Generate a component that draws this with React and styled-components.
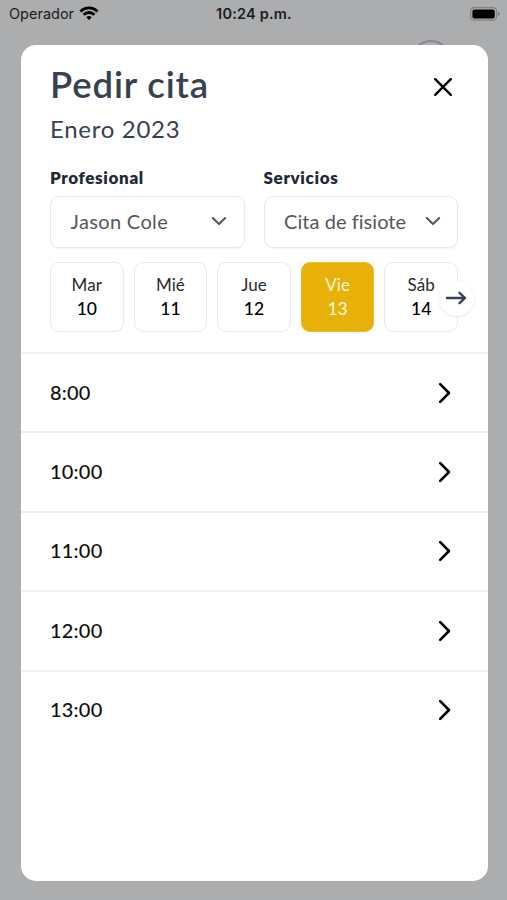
import React, { useState } from 'react';
import styled, { createGlobalStyle } from 'styled-components';

const GlobalStyle = createGlobalStyle`
  * {
    box-sizing: border-box;
  }
  body {
    margin: 0;
    background: #acadaf;
    font-family: Lato, "Liberation Sans", sans-serif;
  }
  button {
    padding: 0;
    border: 0;
    background: none;
    font: inherit;
    color: inherit;
  }
  svg {
    display: block;
    fill: none;
    stroke: currentColor;
    stroke-linecap: round;
    stroke-linejoin: round;
  }
`;

const Screen = styled.div`
  position: relative;
  display: flex;
  flex-direction: column;
  height: 900px;
  overflow: hidden;
`;

const StatusBar = styled.div`
  display: grid;
  grid-template-columns: 1fr auto 1fr;
  align-items: center;
  flex: none;
  height: 27px;
  margin-bottom: 17.5px;
  padding: 0 7px 0 9px;
  font-family: Inter, sans-serif;
  font-size: 14.5px;
  color: #1c1c1d;
`;

const Carrier = styled.div`
  display: flex;
  align-items: center;
  gap: 5px;
`;

const WifiIcon = styled.svg`
  color: #000;
  stroke-linecap: butt;
`;

const Clock = styled.div`
  padding-right: 1px;
  font-weight: 600;
  letter-spacing: 0.2px;
`;

const Battery = styled.div`
  justify-self: end;
`;

// Botón de la pantalla de atrás, asoma por encima del modal
const BackgroundCircle = styled.div`
  position: absolute;
  top: 40px;
  left: 410px;
  width: 42px;
  height: 42px;
  border: 2px solid #85868e;
  border-radius: 50%;
`;

const Modal = styled.div`
  position: relative;
  flex: none;
  width: 467px;
  height: 836.5px;
  margin-left: 20.5px;
  border-radius: 15px;
  background: #fff;
`;

const Header = styled.div`
  display: flex;
  justify-content: space-between;
  padding: 16.5px 34.5px 0 29.5px;
`;

const Title = styled.h1`
  margin: 0;
  font-size: 36.5px;
  line-height: 46px;
  font-weight: 600;
  letter-spacing: 0.85px;
  color: #374151;
`;

const Month = styled.div`
  font-size: 24px;
  line-height: 44px;
  letter-spacing: 0.7px;
  color: #374151;
`;

const CloseButton = styled.button`
  align-self: flex-start;
  margin-top: 15.5px;
`;

const Filters = styled.div`
  display: grid;
  grid-template-columns: 1fr 1fr;
  gap: 19px;
  padding: 15px 29.5px 0;
`;

const Label = styled.div`
  margin-bottom: 6px;
  font-size: 17px;
  line-height: 24px;
  font-weight: 800;
  letter-spacing: 0.65px;
  color: #1f2937;
`;

const Select = styled.button`
  display: flex;
  align-items: center;
  justify-content: space-between;
  width: 100%;
  height: 51.5px;
  padding: 0 16.5px 1px 19.5px;
  border: 1.5px solid #e7e8ea;
  border-radius: 9px;
  box-shadow: 0 1px 2px rgba(0, 0, 0, 0.05);
  font-size: 20px;
  letter-spacing: ${({ $spacing }) => $spacing};
  color: #55575b;
`;

const Days = styled.div`
  position: relative;
  display: flex;
  gap: 10px;
  padding: 14.5px 29.5px 20px;
`;

const Day = styled.button`
  flex: 1;
  height: 70px;
  padding-bottom: 1px;
  border: 1.5px solid ${({ $active }) => ($active ? '#eebb2b' : '#e9eaec')};
  border-radius: 9px;
  background: ${({ $active }) => ($active ? '#e7b10a' : '#fff')};
  color: ${({ $active }) => ($active ? '#fff6d5' : '#2b2b2b')};
`;

const DayName = styled.div`
  font-size: 17px;
  line-height: 24px;
  letter-spacing: 0.1px;
`;

const DayNumber = styled.div`
  font-size: 17.5px;
  line-height: 24px;
  font-weight: 500;
  color: ${({ $active }) => ($active ? 'inherit' : '#000')};
`;

const NextButton = styled.button`
  position: absolute;
  top: 33px;
  right: 14px;
  display: flex;
  align-items: center;
  justify-content: center;
  width: 35px;
  height: 35px;
  border-radius: 50%;
  background: #fff;
  box-shadow: 0 1px 3px rgba(0, 0, 0, 0.1);
  color: #374151;
`;

const Slot = styled.button`
  display: flex;
  align-items: center;
  justify-content: space-between;
  width: 100%;
  height: 79.4px;
  padding: 0 37px 0 29.5px;
  border-top: 2px solid #eeeff1;
  font-size: 20px;
  font-weight: 500;
  letter-spacing: 0.2px;
  color: #111;
`;

const SlotTime = styled.span`
  margin-top: -2px;
`;

const ChevronDown = () => (
  <svg width="16" height="10" viewBox="0 0 16 10" strokeWidth="2.1">
    <path d="M1.8 2L8 8l6.200-6" />
  </svg>
);

const days = [
  { name: 'Mar', number: 10 },
  { name: 'Mié', number: 11 },
  { name: 'Jue', number: 12 },
  { name: 'Vie', number: 13 },
  { name: 'Sáb', number: 14 },
];

const slots = ['8:00', '10:00', '11:00', '12:00', '13:00'];

const App = () => {
  const [selected, setSelected] = useState(13);

  return (
    <Screen>
      <GlobalStyle />
      <StatusBar>
        <Carrier>
          Operador
          <WifiIcon width="20" height="15" viewBox="0 0 20 15" strokeWidth="2.8">
            <path d="M1.4 5.4a12.3 12.3 0 0 1 17.2 0" />
            <path d="M4.6 8.7a7.7 7.7 0 0 1 10.8 0" />
            <path d="M10 14l-2.7-2.8a3.9 3.9 0 0 1 5.4 0z" fill="currentColor" stroke="none" />
          </WifiIcon>
        </Carrier>
        <Clock>10:24 p.m.</Clock>
        <Battery>
          <svg width="30" height="14" viewBox="0 0 30 14">
            <rect x="0.6" y="0.6" width="26" height="12.6" rx="3.6" stroke="#828385" strokeWidth="1.2" />
            <rect x="2.4" y="2.4" width="22.4" height="9" rx="2" fill="#000" stroke="none" />
            <path d="M28 4.8q1.6.6 1.6 2.1T28 9z" fill="#77787a" stroke="none" />
          </svg>
        </Battery>
      </StatusBar>
      <BackgroundCircle />

      <Modal>
        <Header>
          <div>
            <Title>Pedir cita</Title>
            <Month>Enero 2023</Month>
          </div>
          <CloseButton aria-label="Cerrar">
            <svg width="20" height="20" viewBox="0 0 20 20" strokeWidth="2.4" color="#000">
              <path d="M2.2 2.2l15.6 15.6M17.8 2.2L2.2 17.8" />
            </svg>
          </CloseButton>
        </Header>

        <Filters>
          <div>
            <Label>Profesional</Label>
            <Select $spacing="0.35px">
              Jason Cole
              <ChevronDown />
            </Select>
          </div>
          <div>
            <Label>Servicios</Label>
            <Select $spacing="0.05px">
              Cita de fisiote
              <ChevronDown />
            </Select>
          </div>
        </Filters>

        <Days>
          {days.map((day) => (
            <Day
              key={day.number}
              $active={day.number === selected}
              onClick={() => setSelected(day.number)}
            >
              <DayName>{day.name}</DayName>
              <DayNumber $active={day.number === selected}>{day.number}</DayNumber>
            </Day>
          ))}
          <NextButton aria-label="Siguiente">
            <svg width="22" height="14" viewBox="0 0 22 14" strokeWidth="2.4">
              <path d="M2 7h18M14.5 1.8L20 7l-5.5 5.2" />
            </svg>
          </NextButton>
        </Days>

        {slots.map((slot) => (
          <Slot key={slot}>
            <SlotTime>{slot}</SlotTime>
            <svg width="13" height="22" viewBox="0 0 13 22" strokeWidth="2.6" color="#000">
              <path d="M2.2 2.2L11 11l-8.800 8.800" />
            </svg>
          </Slot>
        ))}
      </Modal>
    </Screen>
  );
};

export default App;
